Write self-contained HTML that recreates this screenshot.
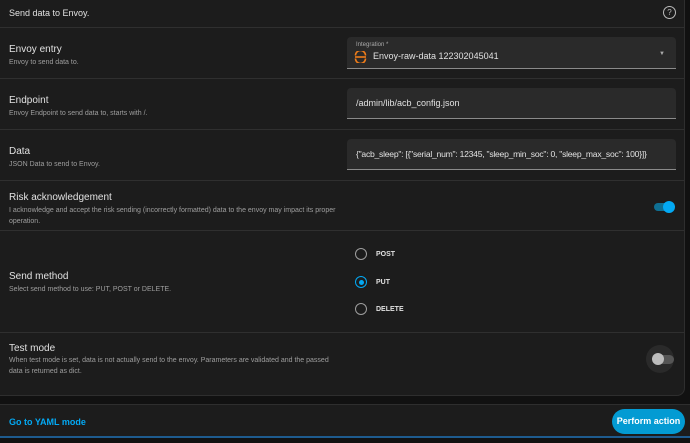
<!DOCTYPE html><html><head><style>
body{margin:0;width:690px;height:443px;background:#111;font-family:"Liberation Sans",sans-serif;overflow:hidden;position:relative;color:#e1e1e1}
.card{position:absolute;left:0;top:0;width:684px;height:395px;background:#1c1c1c;border-right:1px solid #2e2e2e;border-bottom:1px solid #2e2e2e;border-radius:0 0 8px 0}
.row{position:absolute;left:0;width:684px;border-top:1px solid #2f2f2f}
.t{position:absolute;left:9px;font-size:10px;color:#e1e1e1}
.d{position:absolute;left:9px;font-size:7px;color:#9e9e9e;line-height:11px;width:330px}
.f{position:absolute;left:347px;width:329px;background:#2a2a2a;border-bottom:1px solid #8a8a8a;border-radius:4px 4px 0 0;font-size:9px;color:#e1e1e1}
.r{position:absolute;left:355px;width:10px;height:10px;border:1.5px solid #9e9e9e;border-radius:50%}
.rl{position:absolute;left:376px;font-size:7px;color:#e1e1e1;font-weight:bold}
</style></head><body>
<div class="card">
<div class="t" style="top:8px;font-size:9px">Send data to Envoy.</div>
<div style="position:absolute;left:663px;top:6px;width:11px;height:11px;border:1.3px solid #bbb;border-radius:50%;font-size:8px;text-align:center;line-height:11px;color:#bbb">?</div>
<div class="row" style="top:27px;height:51px">
<div class="t" style="top:16px">Envoy entry</div><div class="d" style="top:29px">Envoy to send data to.</div>
<div class="f" style="top:9px;height:31px"><div style="position:absolute;left:9px;top:5px;font-size:6px;color:#aaa">Integration *</div>
<svg style="position:absolute;left:7px;top:14px" width="13" height="12" viewBox="0 0 13 12"><path d="M1.5 4.5 A5 5 0 0 1 11.5 4.5 M1.5 7.5 A5 5 0 0 0 11.5 7.5" fill="none" stroke="#f07d1a" stroke-width="1.6"/><line x1="1" y1="6" x2="12" y2="6" stroke="#f07d1a" stroke-width="1.6"/></svg>
<div style="position:absolute;left:26px;top:14px">Envoy-raw-data 122302045041</div>
<div style="position:absolute;left:312px;top:14px;font-size:6px;color:#aaa">▼</div></div></div>
<div class="row" style="top:78px;height:51px">
<div class="t" style="top:16px">Endpoint</div><div class="d" style="top:29px">Envoy Endpoint to send data to, starts with /.</div>
<div class="f" style="top:9px;height:30px"><div style="position:absolute;left:9px;top:10px">/admin/lib/acb_config.json</div></div></div>
<div class="row" style="top:129px;height:51px">
<div class="t" style="top:16px">Data</div><div class="d" style="top:29px">JSON Data to send to Envoy.</div>
<div class="f" style="top:9px;height:30px"><div style="position:absolute;left:9px;top:10px;font-size:8.6px;white-space:nowrap;letter-spacing:-0.25px">{"acb_sleep": [{"serial_num": 12345, "sleep_min_soc": 0, "sleep_max_soc": 100}]}</div></div></div>
<div class="row" style="top:180px;height:50px">
<div class="t" style="top:11px">Risk acknowledgement</div><div class="d" style="top:24px">I acknowledge and accept the risk sending (incorrectly formatted) data to the envoy may impact its proper operation.</div>
<div style="position:absolute;left:654px;top:22px;width:18px;height:8px;border-radius:4px;background:#0f6f93"></div>
<div style="position:absolute;left:663px;top:20px;width:12px;height:12px;border-radius:50%;background:#03a9f4"></div></div>
<div class="row" style="top:230px;height:102px">
<div class="t" style="top:40px">Send method</div><div class="d" style="top:53px">Select send method to use: PUT, POST or DELETE.</div>
<div class="r" style="top:17px"></div><div class="rl" style="top:20px">POST</div>
<div class="r" style="top:45px;border-color:#03a9f4"><div style="position:absolute;left:2.5px;top:2.5px;width:5px;height:5px;border-radius:50%;background:#03a9f4"></div></div><div class="rl" style="top:48px">PUT</div>
<div class="r" style="top:72px"></div><div class="rl" style="top:75px">DELETE</div></div>
<div class="row" style="top:332px;height:63px">
<div class="t" style="top:10px">Test mode</div><div class="d" style="top:22px">When test mode is set, data is not actually send to the envoy. Parameters are validated and the passed data is returned as dict.</div>
<div style="position:absolute;left:646px;top:12px;width:28px;height:28px;border-radius:50%;background:#2a2a2a"></div>
<div style="position:absolute;left:655px;top:22px;width:19px;height:9px;border-radius:5px;background:#555"></div>
<div style="position:absolute;left:652px;top:20px;width:12px;height:12px;border-radius:50%;background:#bdbdbd"></div></div>
</div>
<div style="position:absolute;left:0;top:404px;width:690px;height:32px;background:#1c1c1c;border-top:1px solid #2e2e2e"></div>
<div style="position:absolute;left:9px;top:417px;font-size:9px;color:#03a9f4;font-weight:bold">Go to YAML mode</div>
<div style="position:absolute;left:612px;top:409px;width:73px;height:25px;border-radius:13px;background:#039bd3;color:#fff;font-size:9px;font-weight:bold;text-align:center;line-height:25px">Perform action</div>
<div style="position:absolute;left:0;top:436px;width:690px;height:2px;background:#1e5b8e"></div>
</body></html>
